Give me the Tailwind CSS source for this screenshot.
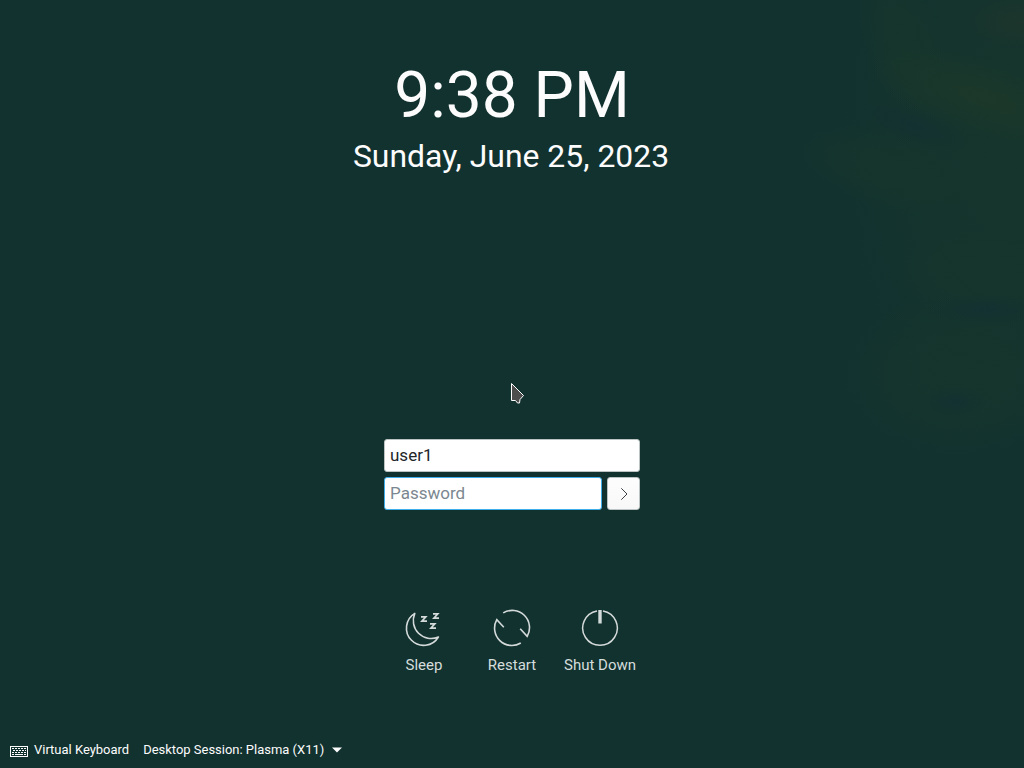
<!DOCTYPE html>
<html lang="en">
<head>
<meta charset="utf-8">
<title>Login</title>
<script src="https://cdn.jsdelivr.net/npm/@tailwindcss/browser@4"></script>
</head>
<body class="w-[1024px] h-[768px] overflow-hidden bg-[#123230] font-['Roboto',sans-serif] text-[#fcfcfc]">
<div class="relative w-[1024px] h-[768px] flex flex-col items-center">
  <!-- soft wallpaper glow -->
  <svg class="absolute inset-0" width="1024" height="768" viewBox="0 0 1024 768" fill="none" aria-hidden="true">
    <defs>
      <radialGradient id="g"><stop offset="0" stop-color="#1b382a"/><stop offset=".4" stop-color="#1b382a" stop-opacity=".7"/><stop offset="1" stop-color="#1b382a" stop-opacity="0"/></radialGradient>
      <radialGradient id="e"><stop offset="0" stop-color="#16352c"/><stop offset=".5" stop-color="#16352c" stop-opacity=".7"/><stop offset="1" stop-color="#16352c" stop-opacity="0"/></radialGradient>
      <radialGradient id="r"><stop offset="0" stop-color="#1d352c"/><stop offset="1" stop-color="#1d352c" stop-opacity="0"/></radialGradient>
      <radialGradient id="d"><stop offset="0" stop-color="#133131"/><stop offset="1" stop-color="#133131" stop-opacity="0"/></radialGradient>
    </defs>
    <ellipse cx="1010" cy="140" rx="170" ry="300" fill="url(#e)"/>
    <ellipse cx="890" cy="170" rx="100" ry="40" fill="url(#e)" transform="rotate(15 890 170)"/>
    <ellipse cx="990" cy="270" rx="95" ry="50" fill="url(#e)"/>
    <ellipse cx="960" cy="375" rx="120" ry="85" fill="url(#e)"/>
    <ellipse cx="905" cy="45" rx="40" ry="90" fill="url(#e)" transform="rotate(-20 905 45)"/>
    <ellipse cx="985" cy="98" rx="125" ry="38" fill="url(#g)" transform="rotate(18 985 98)"/>
    <ellipse cx="1020" cy="22" rx="55" ry="28" fill="url(#r)"/>
    <ellipse cx="915" cy="126" rx="55" ry="18" fill="url(#d)" transform="rotate(20 915 126)"/>
    <ellipse cx="985" cy="310" rx="60" ry="16" fill="url(#d)"/>
    <ellipse cx="955" cy="402" rx="32" ry="16" fill="url(#d)"/>
  </svg>

  <header class="relative mt-[58px] flex flex-col items-center gap-[3px] whitespace-nowrap">
    <div class="text-[64px] leading-[76px]">9:38 PM</div>
    <div class="text-[31.9px] leading-[38px] mr-[2px]">Sunday, June 25, 2023</div>
  </header>

  <form class="relative mt-[264px] w-64 flex flex-col gap-[5px] text-[17px]">
    <div class="h-[33px] rounded-[3px] border border-[#bcc4c3] bg-white px-[5px] leading-[31px] text-[#232629]">user1</div>
    <div class="flex gap-[5px]">
      <div class="w-[218px] h-[33px] rounded-[3px] border border-[#3daee9] bg-white px-[5px] leading-[31px] text-[#7b8790]">Password</div>
      <button type="button" aria-label="Log in" class="w-[33px] h-[33px] rounded-[3px] border border-[#bcc4c3] bg-linear-to-b from-[#fdfdfd] to-[#f8f8f8] flex">
        <svg width="31" height="31" viewBox="0 0 31 31" fill="none" stroke="#31363b" stroke-width=".95"><path d="M13.3 10.3L19 16L13.3 21.7"/></svg>
      </button>
    </div>
  </form>

  <nav class="relative mt-[98px] flex text-[15px] leading-[18px] text-[#d5dddc] whitespace-nowrap">
    <div class="w-[88px] flex flex-col items-center gap-2">
      <svg width="40" height="40" viewBox="0 0 40 40" fill="none" stroke="#d3dad9" stroke-width="1.6">
        <path d="M10.8 5.4A17.2 17.2 0 1 0 34.4 29A17.9 17.9 0 0 1 10.8 5.4Z" stroke-linejoin="round"/>
        <path d="M17 8.8H21.8L17.9 13.2H23M29 5.8H33.8L29.9 10.2H35M26 15.8H30.8L26.9 20.2H32" stroke-width="1.7"/>
      </svg>
      <span>Sleep</span>
    </div>
    <div class="w-[88px] flex flex-col items-center gap-2">
      <svg width="40" height="40" viewBox="0 0 40 40" fill="none" stroke="#d3dad9" stroke-width="1.6">
        <path d="M11.2 4.9A17.3 17.3 0 0 1 35.2 28.3L28.2 20.7M28.8 35A17.3 17.3 0 0 1 4.8 11.7L11.8 19.3"/>
      </svg>
      <span>Restart</span>
    </div>
    <div class="w-[88px] flex flex-col items-center gap-2">
      <svg width="40" height="40" viewBox="0 0 40 40" fill="none" stroke="#d3dad9" stroke-width="1.5">
        <path d="M23 2.95A17.3 17.3 0 1 1 17 2.95"/><path d="M20 2V15.5" stroke-width="3.4"/>
      </svg>
      <span>Shut Down</span>
    </div>
  </nav>

  <footer class="relative mt-auto w-full h-[36px] flex items-center pl-[10px] text-[12.97px] whitespace-nowrap">
    <svg class="mt-[3px]" width="18" height="11" viewBox="0 0 18 11" fill="none" stroke="#fcfcfc">
      <rect x=".5" y=".5" width="17" height="10"/>
      <path d="M2 2.5H16M3 4.5H16M2 6.5H16" stroke-dasharray="2 1"/><path d="M2 8.5H4M5 8.5H13M14 8.5H16"/>
    </svg>
    <span class="ml-[6px]">Virtual Keyboard</span>
    <span class="ml-[14px]">Desktop Session: Plasma (X11)</span>
    <svg class="ml-2" width="10" height="6" viewBox="0 0 10 6"><path d="M0 .5H10L5 5.5Z" fill="#fcfcfc"/></svg>
  </footer>

  <!-- pointer -->
  <svg class="absolute left-[510px] top-[382px]" width="16" height="24" viewBox="0 0 16 24"><path d="M1.5 1.5V18.5H5.5L7.5 21H9.5L10 17.5L13.5 13.5Z" fill="#4d4d4d" stroke="#fcfcfc"/></svg>
</div>
</body>
</html>
